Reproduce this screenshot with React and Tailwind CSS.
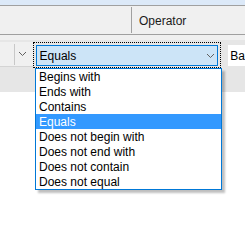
import React from "react";

const options = [
  "Begins with",
  "Ends with",
  "Contains",
  "Equals",
  "Does not begin with",
  "Does not end with",
  "Does not contain",
  "Does not equal",
];

function Chevron() {
  return (
    <svg width="9" height="6" viewBox="0 0 9 6" className="shrink-0">
      <path d="M1 1 L4.5 4.5 L8 1" fill="none" stroke="#606060" strokeWidth="1" />
    </svg>
  );
}

export default function App() {
  const selected = "Equals";

  return (
    <div className="relative w-[245px] h-[248px] overflow-hidden bg-white text-[12px] leading-none text-black font-['Liberation_Sans',Arial,sans-serif]">
      {/* title strip */}
      <div className="h-[5px] bg-[#dce9f8] border-b border-[#a0a0a0] box-content" />

      {/* column header */}
      <div className="flex items-center h-[28px] bg-[#f0f0f0] border-b border-[#a0a0a0] box-content">
        <div className="w-[131px]" />
        <div className="w-px h-[26px] bg-[#a0a0a0]" />
        <div className="pl-[7px] pt-[2px] text-[#1a1a1a]">Operator</div>
      </div>

      {/* filter row */}
      <div className="h-[57px] bg-[#e6e6e6] border-t-[5px] border-[#f0f0f0]">
        <div className="flex items-start pt-[2px]">
          <div className="flex items-center w-[33px] h-[25px] bg-[#f0f0f0] border-b border-[#d4d4d4]">
            <div className="w-[14px]" />
            <div className="w-px h-[21px] bg-[#c8c8c8]" />
            <div className="pl-[3px]">
              <Chevron />
            </div>
          </div>

          <div className="w-[191px] h-[26px] border border-dotted border-black p-[2px]">
            <div className="flex items-center justify-between h-[21px] bg-[#cce4f7] border border-[#0078d7] pl-[3px] pr-[2px]">
              <span>{selected}</span>
              <Chevron />
            </div>
          </div>

          <div className="ml-[7px] mt-[3px] flex items-center h-[21px] flex-1 bg-white pl-[2px]">
            Ba
          </div>
        </div>
      </div>

      {/* dropdown list */}
      <div className="absolute left-[35px] top-[68px] w-[187px] bg-white border border-[#0078d7] shadow-[3px_3px_2px_rgba(0,0,0,0.25)]">
        {options.map((o) => (
          <div
            key={o}
            className={
              "h-[15px] flex items-center pl-[3px] " +
              (o === selected ? "bg-[#3399ff] text-white" : "")
            }
          >
            {o}
          </div>
        ))}
      </div>
    </div>
  );
}
